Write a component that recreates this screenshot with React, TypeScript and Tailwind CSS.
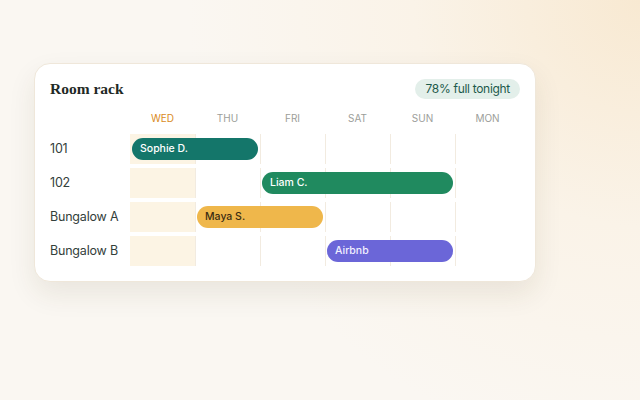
import React from 'react';

type Booking = {
  guest: string;
  start: number; // column index 0 = WED
  span: number;
  tone: 'teal' | 'green' | 'amber' | 'violet';
};

type Room = {
  name: string;
  booking?: Booking;
};

const DAYS = ['WED', 'THU', 'FRI', 'SAT', 'SUN', 'MON'];

const TONES: Record<Booking['tone'], string> = {
  teal: 'bg-[#14766a] text-white',
  green: 'bg-[#208a5f] text-white',
  amber: 'bg-[#efb74b] text-[#3b2c12]',
  violet: 'bg-[#6b66d8] text-[#f1f0ff]',
};

const START: Record<number, string> = {
  0: 'col-start-2',
  1: 'col-start-3',
  2: 'col-start-4',
  3: 'col-start-5',
  4: 'col-start-6',
  5: 'col-start-7',
};

const SPAN: Record<number, string> = {
  1: 'col-span-1',
  2: 'col-span-2',
  3: 'col-span-3',
  4: 'col-span-4',
};

const ROOMS: Room[] = [
  { name: '101', booking: { guest: 'Sophie D.', start: 0, span: 2, tone: 'teal' } },
  { name: '102', booking: { guest: 'Liam C.', start: 2, span: 3, tone: 'green' } },
  { name: 'Bungalow A', booking: { guest: 'Maya S.', start: 1, span: 2, tone: 'amber' } },
  { name: 'Bungalow B', booking: { guest: 'Airbnb', start: 3, span: 2, tone: 'violet' } },
];

const sans = { fontFamily: 'Inter, "Noto Sans", sans-serif' };

function RackRow({ room }: { room: Room }) {
  const b = room.booking;
  return (
    <div className="grid h-[30px] grid-cols-[80px_repeat(6,65px)] grid-rows-1">
      <div className="col-start-1 row-start-1 flex items-center text-[12.5px] tracking-[-0.2px] text-[#33403b]">
        {room.name}
      </div>
      {DAYS.map((d, i) => (
        <div
          key={d}
          className={`row-start-1 ${START[i]} ${i === 0 ? 'bg-[#fcf4e4]' : 'border-l border-[#f2ebe0]'}`}
        />
      ))}
      {b && (
        <div
          className={`row-start-1 ${START[b.start]} ${SPAN[b.span]} z-10 mx-[2px] my-[4px] flex items-center rounded-full pl-2 text-[10.5px] font-medium ${TONES[b.tone]}`}
        >
          {b.guest}
        </div>
      )}
    </div>
  );
}

export default function App() {
  return (
    <div
      className="h-[400px] w-[640px] overflow-hidden bg-[radial-gradient(circle_at_100%_0%,#f8e9d2_0%,#faf3e8_30%,#faf7f2_60%)]"
      style={sans}
    >
      <div className="pl-[34px] pt-[63px]">
        <div className="w-[502px] rounded-[16px] border border-[#efe7da] bg-white px-[15px] pb-[15px] pt-[15px] shadow-[0_12px_28px_rgba(70,50,20,0.09)]">
          <div className="flex h-5 items-center justify-between">
            <h2
              className="text-[15.5px] font-bold text-[#1f2a26]"
              style={{ fontFamily: '"Liberation Serif", "DejaVu Serif", serif' }}
            >
              Room rack
            </h2>
            <span className="flex h-5 items-center rounded-full bg-[#e3efea] px-[10px] text-[12px] tracking-[-0.3px] text-[#1d5a4b]">
              78% full tonight
            </span>
          </div>

          <div className="mt-3 grid h-[14px] grid-cols-[80px_repeat(6,65px)] items-center">
            <div />
            {DAYS.map((d, i) => (
              <div
                key={d}
                className={`text-center text-[10px] ${i === 0 ? 'text-[#d98a1d]' : 'text-[#9c9e9a]'}`}
              >
                {d}
              </div>
            ))}
          </div>

          <div className="mt-[9px] flex flex-col gap-1">
            {ROOMS.map((r) => (
              <RackRow key={r.name} room={r} />
            ))}
          </div>
        </div>
      </div>
    </div>
  );
}
